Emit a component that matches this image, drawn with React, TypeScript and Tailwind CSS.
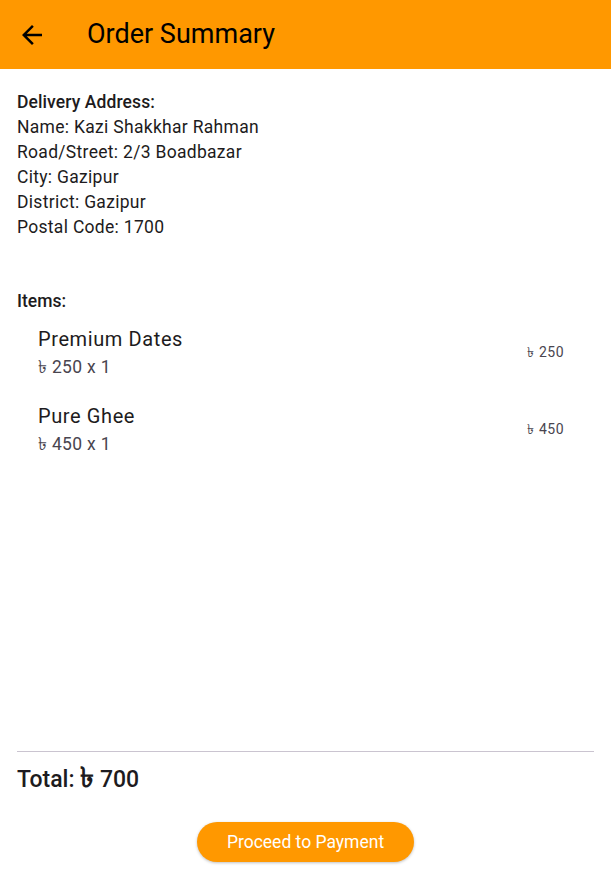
import React from "react";

type Item = { name: string; price: number; qty: number };

const items: Item[] = [
  { name: "Premium Dates", price: 250, qty: 1 },
  { name: "Pure Ghee", price: 450, qty: 1 },
];

const BackArrow = () => (
  <svg viewBox="0 0 24 24" className="w-[30px] h-[30px]" fill="currentColor">
    <path d="M20 11H7.83l5.59-5.59L12 4l-8 8 8 8 1.41-1.41L7.83 13H20v-2z" />
  </svg>
);

const OrderSummary = () => {
  const total = items.reduce((s, i) => s + i.price * i.qty, 0);

  return (
    <div className="min-h-screen flex flex-col bg-white text-[#1d1b20] font-['Roboto',sans-serif]">
      <header className="h-[69px] bg-[#ff9800] flex items-center pl-[16px] shrink-0">
        <button className="w-[32px] h-[32px] flex items-center justify-center text-black">
          <BackArrow />
        </button>
        <h1 className="ml-[39px] text-[27px] text-black leading-none">Order Summary</h1>
      </header>

      <div className="flex-1 flex flex-col px-[17px] pt-[21px] pb-[17px]">
        <div className="text-[17.5px] leading-[25px] tracking-[0.3px]">
          <p className="font-medium tracking-[0.1px]">Delivery Address:</p>
          <p>Name: Kazi Shakkhar Rahman</p>
          <p>Road/Street: 2/3 Boadbazar</p>
          <p>City: Gazipur</p>
          <p>District: Gazipur</p>
          <p>Postal Code: 1700</p>
        </div>

        <p className="mt-[49px] text-[17.5px] leading-[25px] font-medium">Items:</p>
        <div className="flex flex-col">
          {items.map((item) => (
            <div key={item.name} className="flex items-center justify-between py-[10px] pl-[21px] pr-[30px]">
              <div>
                <p className="text-[20px] leading-[30px] tracking-[0.6px]">{item.name}</p>
                <p className="text-[17.5px] leading-[27px] tracking-[0.3px] text-[#49454f]">
                  ৳ {item.price} x {item.qty}
                </p>
              </div>
              <span className="text-[14px] tracking-[0.5px] text-[#49454f]">৳ {item.price}</span>
            </div>
          ))}
        </div>

        <div className="flex-1" />

        <div className="border-t border-[#cac4d0]" />
        <p className="mt-[12px] h-[30px] text-[23px] leading-[30px] font-medium">
          Total: <span className="text-[28px] leading-none font-bold">৳</span> {total}
        </p>

        <div className="flex justify-center mt-[28px]">
          <button className="h-[40px] px-[30px] rounded-full bg-[#ff9800] text-white text-[17.5px] shadow-[0_1px_3px_rgba(0,0,0,0.25)]">
            Proceed to Payment
          </button>
        </div>
      </div>
    </div>
  );
};

export default function App() {
  return <OrderSummary />;
}
